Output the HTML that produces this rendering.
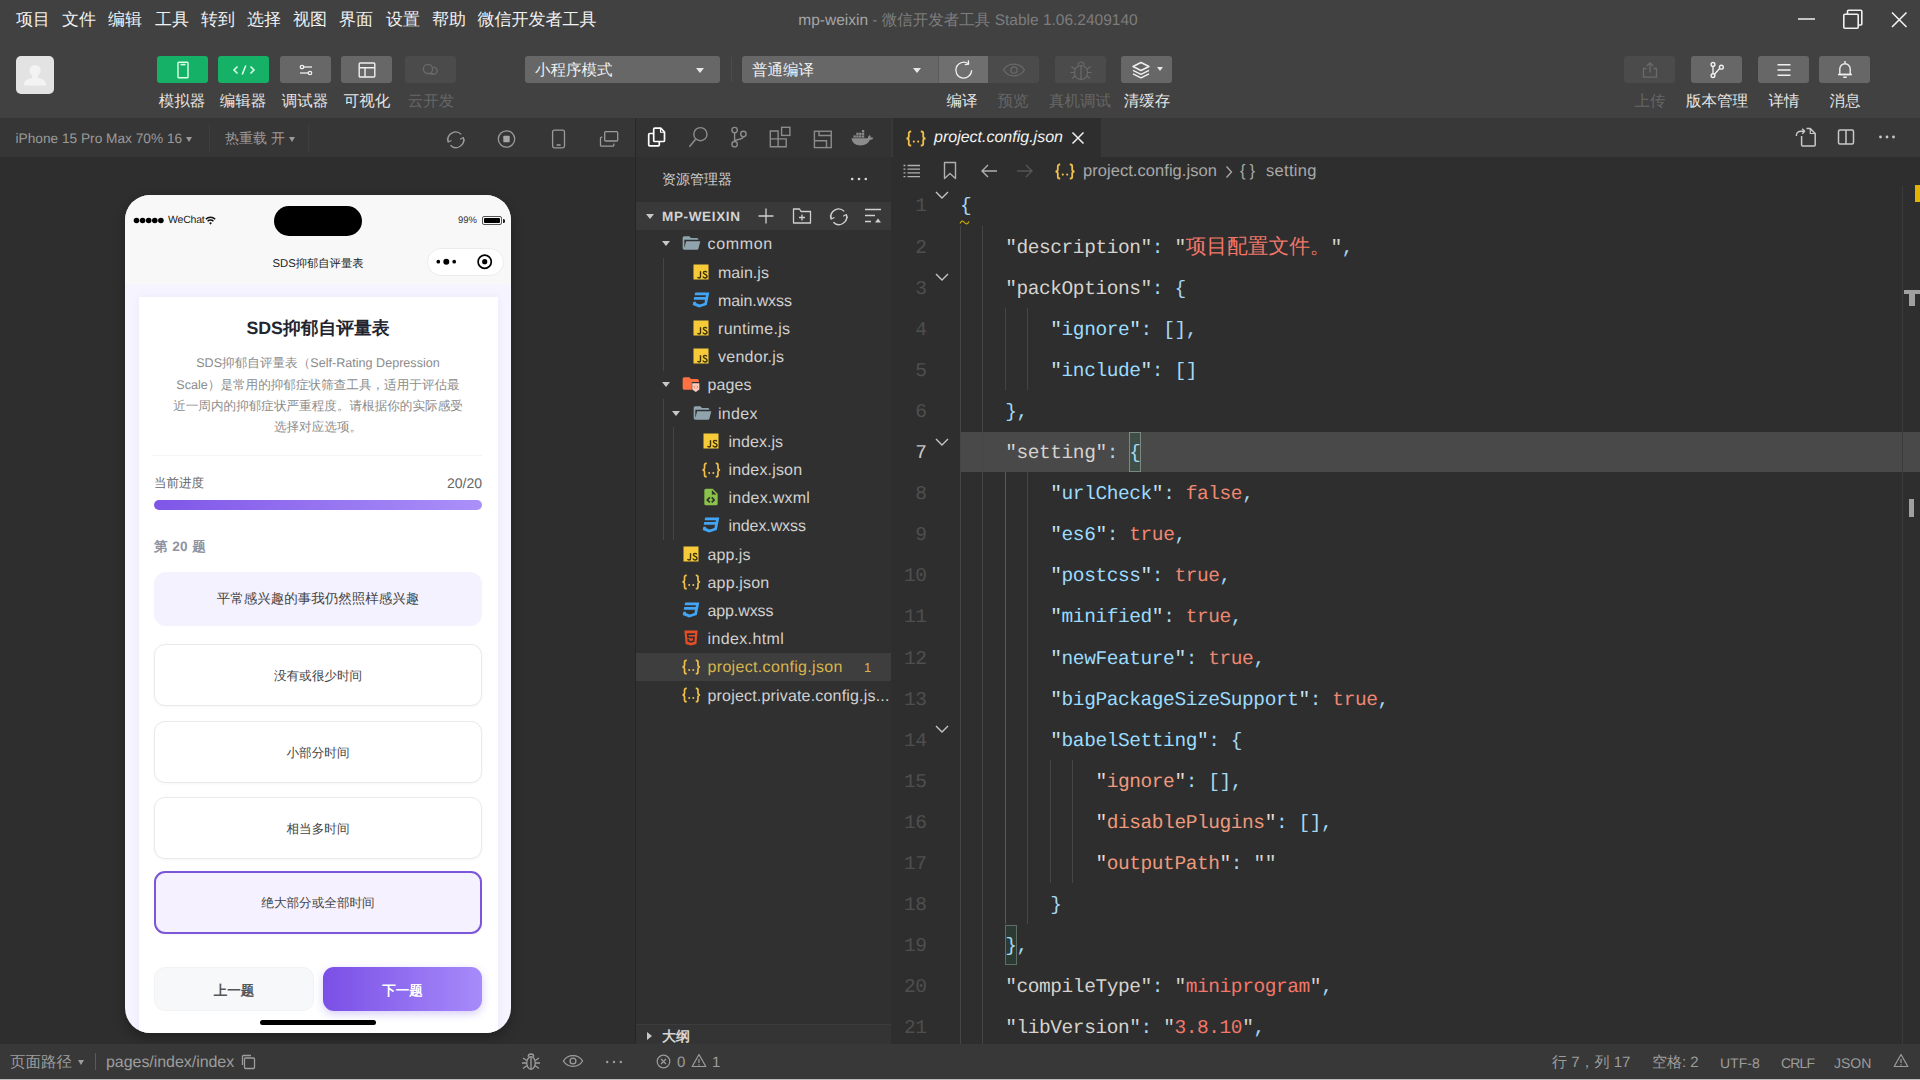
<!DOCTYPE html>
<html lang="zh">
<head>
<meta charset="utf-8">
<title>mp-weixin</title>
<style>
*{box-sizing:border-box;margin:0;padding:0}
html,body{width:1920px;height:1080px;overflow:hidden;background:#2e2e2e}
body{font-family:"Liberation Sans",sans-serif;color:#ccc;position:relative;text-rendering:geometricPrecision}
.abs{position:absolute}
svg{display:block;overflow:visible}
/* ---------- top bars ---------- */
#menubar{position:absolute;left:0;top:0;width:1920px;height:40px;background:#414141}
#menubar .mi{position:absolute;top:0;height:40px;line-height:40px;font-size:17px;color:#f2f2f2;white-space:nowrap;text-align:center}
#wtitle{position:absolute;left:668px;width:600px;top:1px;height:40px;line-height:40px;text-align:center;font-size:15.5px;color:#7d7d7d;white-space:nowrap}
#wtitle b{font-weight:normal;color:#a6a6a6}
#toolbar{position:absolute;left:0;top:40px;width:1920px;height:78px;background:#414141}
.tbtn{position:absolute;top:16px;width:51px;height:27px;border-radius:3px;background:#676767}
.tbtn.g{background:#14b167}
.tbtn.d{background:#4b4b4b}
.tbtn svg{position:absolute;left:50%;top:50%;transform:translate(-50%,-50%)}
.tlab{position:absolute;top:50.500px;width:90px;height:22px;line-height:22px;margin-left:-45px;text-align:center;font-size:15.5px;color:#e6e6e6;white-space:nowrap}
.tlab.d{color:#666}
.tsel{position:absolute;top:16px;height:27px;border-radius:3px;background:#676767;color:#f0f0f0;font-size:15.5px;line-height:29px;padding-left:10px;white-space:nowrap}
.caret{position:absolute;width:0;height:0;border-left:4px solid transparent;border-right:4px solid transparent;border-top:5px solid #e8e8e8}
/* ---------- row 3 ---------- */
#simbar{position:absolute;left:0;top:118px;width:635px;height:39px;background:#363636}
#simbar .t{position:absolute;top:1px;height:39px;line-height:39px;font-size:14px;color:#9a9a9a;white-space:nowrap}
#vsep{position:absolute;left:635px;top:118px;width:1px;height:962px;background:#262626}
#actbar{position:absolute;left:636px;top:118px;width:255px;height:39px;background:#333}
#tabbar{position:absolute;left:891px;top:118px;width:1029px;height:39px;background:#383838}
#tab{position:absolute;left:2px;top:0;width:208px;height:39px;background:#2e2e2e}
/* ---------- panels ---------- */
#sim{position:absolute;left:0;top:157px;width:635px;height:888px;background:#2e2e2e}
#explorer{position:absolute;left:636px;top:157px;width:255px;height:888px;background:#303030}
#editor{position:absolute;left:891px;top:157px;width:1029px;height:888px;background:#2e2e2e;overflow:hidden}
#bottombar{position:absolute;left:0;top:1044px;width:1920px;height:36px;background:#383838;border-bottom:1px solid #bdbdbd}

/* ---------- phone ---------- */
#phone{position:absolute;left:125px;top:38px;width:386px;height:838px;border-radius:25px;background:#f6f4ff;overflow:hidden;box-shadow:0 5px 12px rgba(0,0,0,.28)}
#phead{position:absolute;left:0;top:0;width:386px;height:89px;background:#f8f8f8}
#card{position:absolute;left:13.5px;top:102px;width:359.5px;height:760px;background:#fff;box-shadow:0 0 8px rgba(120,100,200,.08)}
.pc{position:absolute;left:0;width:386px;text-align:center;white-space:nowrap}
.opt{position:absolute;left:29px;width:328px;border:1.5px solid #e9e9ee;border-radius:11px;background:#fff;text-align:center;font-size:12.600px;color:#444;white-space:nowrap;box-shadow:0 1px 3px rgba(0,0,0,.04)}

/* ---------- explorer ---------- */
.row{position:absolute;left:0;width:255px;height:28.200px;line-height:28px;font-size:16px;color:#d0d0d0;white-space:nowrap;letter-spacing:-0.1px}
.row .tx{position:absolute;top:1.500px}
.row svg.ic{position:absolute;top:3.500px}
.tri{position:absolute;width:0;height:0;border-left:4px solid transparent;border-right:4px solid transparent;border-top:5.500px solid #c8c8c8}
.guide{position:absolute;width:1px;background:#454545}

/* ---------- editor ---------- */
#editor{font-family:"Liberation Mono",monospace}
.ln{position:absolute;left:0;width:35.500px;text-align:right;font-size:19.500px;letter-spacing:-0.42px;color:#4e4e4e;height:41.100px;line-height:45px;white-space:pre}
.cl{position:absolute;left:69px;font-size:19.500px;letter-spacing:-0.42px;color:#d4d4d4;height:41.100px;line-height:45px;white-space:pre}
.k1{color:#d6d3ce}.k2{color:#9cdcfe}.k3{color:#ee9a7d}.q2{color:#c3e3f4}.q3{color:#e8d8d2}
.p{color:#a6d8f2}.s{color:#f2776a}.b{color:#ee8872}
.ig{position:absolute;width:1px;background:#454545}
.chev{position:absolute;left:44px}
.bc{position:absolute;top:0;line-height:29px;font-family:"Liberation Sans",sans-serif;font-size:16.500px;color:#a9a9a9;white-space:nowrap;letter-spacing:0.05px}

/* ---------- bottom bar ---------- */
#bottombar .t{position:absolute;top:1px;height:35px;line-height:36px;font-size:15px;color:#9d9d9d;white-space:nowrap}
</style>
</head>
<body>
<!-- ================= MENU BAR ================= -->
<div id="menubar">
  <div class="mi" style="left:10px;width:46px">项目</div>
  <div class="mi" style="left:56px;width:46px">文件</div>
  <div class="mi" style="left:102px;width:46px">编辑</div>
  <div class="mi" style="left:149px;width:46px">工具</div>
  <div class="mi" style="left:195px;width:46px">转到</div>
  <div class="mi" style="left:241px;width:46px">选择</div>
  <div class="mi" style="left:287px;width:46px">视图</div>
  <div class="mi" style="left:333px;width:46px">界面</div>
  <div class="mi" style="left:380px;width:46px">设置</div>
  <div class="mi" style="left:426px;width:46px">帮助</div>
  <div class="mi" style="left:472px;width:130px">微信开发者工具</div>
  <div id="wtitle"><b>mp-weixin</b> - 微信开发者工具 Stable 1.06.2409140</div>
  <svg class="abs" style="left:1794px;top:8px" width="24" height="24" viewBox="0 0 24 24" fill="none" stroke="#f0f0f0" stroke-width="1.500"><path d="M4 11h17"/></svg>
  <svg class="abs" style="left:1840px;top:8px" width="24" height="24" viewBox="0 0 24 24" fill="none" stroke="#f0f0f0" stroke-width="1.600"><rect x="3.800" y="6.300" width="14.400" height="14" rx="1"/><path d="M7.500 6V3.200a1 1 0 0 1 1-1h12.300a1 1 0 0 1 1 1V16a1 1 0 0 1-1 1H18.500"/></svg>
  <svg class="abs" style="left:1887px;top:8px" width="24" height="24" viewBox="0 0 24 24" fill="none" stroke="#f0f0f0" stroke-width="1.600"><path d="M5 4.500l14.500 14.500M19.500 4.500L5 19"/></svg>
</div>
<!-- ================= TOOLBAR ================= -->
<div id="toolbar">
  <div class="abs" style="left:16px;top:16px;width:38px;height:38px;border-radius:5px;background:#e3e3e3;overflow:hidden">
    <svg width="38" height="38" viewBox="0 0 38 38"><circle cx="19" cy="14.500" r="5.600" fill="#f3f3f3"/><path d="M16 18h6v4c4 .5 8 2 8 7.500H8c0-5.500 4-7 8-7.500z" fill="#f3f3f3"/></svg>
  </div>
  <!-- left buttons -->
  <div class="tbtn g" style="left:157px"><svg width="14" height="18" viewBox="0 0 14 18" fill="none" stroke="#d9ffe9" stroke-width="1.4"><rect x="2" y="1.2" width="10" height="15.6" rx="0.8"/><path d="M4.5 3.6h5" stroke-width="1.6"/></svg></div>
  <div class="tbtn g" style="left:218px"><svg width="24" height="12" viewBox="0 0 24 12" fill="none" stroke="#d9ffe9" stroke-width="1.6"><path d="M5.5 2.5L2 6l3.500 3.500M18.500 2.500L22 6l-3.500 3.500M13.800 1.500l-3.600 9"/></svg></div>
  <div class="tbtn" style="left:280px"><svg width="14" height="12" viewBox="0 0 14 12" fill="none" stroke="#f0f0f0" stroke-width="1.3"><circle cx="3" cy="3" r="1.700"/><path d="M4.700 3H13"/><circle cx="11" cy="9" r="1.700"/><path d="M1 9h8.300"/></svg></div>
  <div class="tbtn" style="left:341px"><svg width="18" height="16" viewBox="0 0 18 16" fill="none" stroke="#f0f0f0" stroke-width="1.4"><rect x="1.200" y="1" width="15.600" height="14" rx="1"/><path d="M1.200 5.800h15.600M7 5.800V15"/></svg></div>
  <div class="tbtn d" style="left:405px"><svg width="20" height="14" viewBox="0 0 20 14" fill="none" stroke="#6a6a6a" stroke-width="1.300"><circle cx="7" cy="6" r="4.600"/><path d="M9.500 9.800a3.600 3.600 0 1 0 3-5.600"/><path d="M7 10.600h6"/></svg></div>
  <div class="tlab" style="left:182px">模拟器</div>
  <div class="tlab" style="left:243px">编辑器</div>
  <div class="tlab" style="left:305px">调试器</div>
  <div class="tlab" style="left:367px">可视化</div>
  <div class="tlab d" style="left:431px">云开发</div>
  <!-- selects -->
  <div class="tsel" style="left:525px;width:195px">小程序模式<div class="caret" style="left:171px;top:12px"></div></div>
  <div class="abs" style="left:731px;top:17px;width:1px;height:25px;background:#4c4c4c"></div>
  <div class="tsel" style="left:742px;width:196px;border-radius:3px 0 0 3px">普通编译<div class="caret" style="left:171px;top:12px"></div></div>
  <div class="tbtn" style="left:938px;width:50px;border-radius:0;background:#6f6f6f;border-left:1px solid #5a5a5a"><svg width="22" height="22" viewBox="0 0 22 22" fill="none" stroke="#f2f2f2" stroke-width="1.250"><path d="M18.600 11.200a7.900 7.900 0 1 1-3.200-6.400"/><path d="M15.300 1.200l.4 3.900-3.900.5" stroke-linejoin="round"/></svg></div>
  <div class="tbtn d" style="left:988px;width:51px;border-radius:0 3px 3px 0"><svg width="24" height="14" viewBox="0 0 24 14" fill="none" stroke="#6a6a6a" stroke-width="1.300"><path d="M1.500 7C4 3 7.800 1.200 12 1.200S20 3 22.500 7C20 11 16.200 12.800 12 12.800S4 11 1.500 7z"/><circle cx="12" cy="7" r="3.200"/></svg></div>
  <div class="tbtn d" style="left:1055px"><svg width="23" height="20" viewBox="0 0 23 20" fill="none" stroke="#6a6a6a" stroke-width="1.200"><path d="M5 12a6.500 6.500 0 0 1 13 0v1a6.500 6.500 0 0 1-13 0z"/><path d="M11.500 5.500v14M8.300 5.200a3.200 3.200 0 0 1 6.400 0M5.200 9L2 6.500M5 12.500H1M5.500 16L2.500 18.500M17.800 9L21 6.500M18 12.500h4M17.500 16l3 2.500"/></svg></div>
  <div class="tbtn" style="left:1121px"><svg style="left:20px" width="20" height="18" viewBox="0 0 20 18" fill="none" stroke="#f0f0f0" stroke-width="1.400" stroke-linejoin="round"><path d="M10 1.500l8 4-8 4-8-4z"/><path d="M2 9.300l8 4 8-4"/><path d="M2 12.800l8 4 8-4"/></svg><div class="caret" style="left:36px;top:11px;border-left-width:3.500px;border-right-width:3.500px;border-top-width:4.500px"></div></div>
  <div class="tlab" style="left:962px">编译</div>
  <div class="tlab d" style="left:1013px">预览</div>
  <div class="tlab d" style="left:1080px">真机调试</div>
  <div class="tlab" style="left:1147px">清缓存</div>
  <!-- right buttons -->
  <div class="tbtn d" style="left:1624px"><svg width="18" height="18" viewBox="0 0 18 18" fill="none" stroke="#6a6a6a" stroke-width="1.300"><path d="M9 11.500V2M5.800 5L9 1.800 12.200 5"/><path d="M5.500 7.500H2.500v8.700h13V7.500h-3"/></svg></div>
  <div class="tbtn" style="left:1691px"><svg width="16" height="18" viewBox="0 0 16 18" fill="none" stroke="#f0f0f0" stroke-width="1.400"><circle cx="4" cy="3.400" r="1.900"/><circle cx="4" cy="14.600" r="1.900"/><circle cx="12.400" cy="6.200" r="1.900"/><path d="M4 5.300v7.400M10.800 7.200L5.500 13.200"/></svg></div>
  <div class="tbtn" style="left:1758px"><svg width="16" height="14" viewBox="0 0 16 14" fill="none" stroke="#f0f0f0" stroke-width="1.500"><path d="M1.500 1.800h13M1.500 7h13M1.500 12.200h13"/></svg></div>
  <div class="tbtn" style="left:1819px"><svg width="16" height="20" viewBox="0 0 16 20" fill="none" stroke="#f0f0f0" stroke-width="1.400" stroke-linejoin="round"><path d="M8 1v2"/><path d="M2.800 14.500V9a5.200 5.200 0 0 1 10.400 0v5.500z"/><path d="M1 14.500h14M6.300 17.300h3.400"/></svg></div>
  <div class="tlab d" style="left:1650px">上传</div>
  <div class="tlab" style="left:1717px">版本管理</div>
  <div class="tlab" style="left:1784px">详情</div>
  <div class="tlab" style="left:1845px">消息</div>
</div>
<!-- ================= ROW 3 ================= -->
<div id="simbar">
  <div class="t" style="left:15.500px;font-size:13.700px">iPhone 15 Pro Max 70% 16</div>
  <div class="caret" style="left:186px;top:18.500px;border-top-color:#9a9a9a;border-left-width:3.500px;border-right-width:3.500px"></div>
  <div class="t" style="left:225px">热重载 开</div>
  <div class="caret" style="left:289px;top:18.500px;border-top-color:#9a9a9a;border-left-width:3.500px;border-right-width:3.500px"></div>
  <div class="abs" style="left:209px;top:6px;width:1px;height:28px;background:#3e3e3e"></div><div class="abs" style="left:308px;top:6px;width:1px;height:28px;background:#3e3e3e"></div>
  <svg class="abs" style="left:445px;top:10.500px" width="22" height="22" viewBox="0 0 22 22" fill="none" stroke="#9a9a9a" stroke-width="1.300"><path d="M3.300 13a7.700 7.700 0 0 1 12.900-7.600M18.300 8.600a7.700 7.700 0 0 1-12.900 7.600"/><path d="M2.200 9.300l1 3.800 3.300-1.700M19.400 12.300l-1-3.800-3.300 1.700" stroke-linejoin="round" stroke-width="1.100"/></svg>
  <svg class="abs" style="left:496px;top:11px" width="20" height="20" viewBox="0 0 20 20" fill="none" stroke="#9a9a9a" stroke-width="1.300"><circle cx="10.500" cy="10" r="8.200"/><rect x="7.300" y="6.800" width="6.400" height="6.400" rx="0.800" fill="#a6a6a6" stroke="none"/></svg>
  <svg class="abs" style="left:550.500px;top:11px" width="16" height="20" viewBox="0 0 16 20" fill="none" stroke="#9a9a9a" stroke-width="1.300"><rect x="1.600" y="1.200" width="11.900" height="17.600" rx="1.800"/><path d="M5.600 16h4" stroke-width="1.600"/></svg>
  <svg class="abs" style="left:598px;top:11px" width="22" height="20" viewBox="0 0 22 20" fill="none" stroke="#9a9a9a" stroke-width="1.300"><rect x="6.700" y="2.700" width="13" height="9.300" rx="1"/><path d="M4.300 8.200H3.500a1 1 0 0 0-1 1v7a1 1 0 0 0 1 1h11.400a1 1 0 0 0 1-1v-1.600"/></svg>
</div>
<div id="actbar">
  <svg class="abs" style="left:0;top:0" width="255" height="39" viewBox="0 0 255 39" fill="none" stroke="#8c8c8c" stroke-width="1.400">
    <g stroke="#fff" stroke-width="1.700" stroke-linejoin="round"><path d="M17.700 22.500V11.200a1 1 0 0 1 1-1h6l3.800 3.800v8.500a1 1 0 0 1-1 1H18.700a1 1 0 0 1-1-1z"/><path d="M24.500 10.200v4h4" stroke-width="1.100"/><path d="M17.700 15.500H13.700a1 1 0 0 0-1 1v10.300a1 1 0 0 0 1 1h8.600a1 1 0 0 0 1-1V23.500"/></g>
    <circle cx="64.400" cy="16.200" r="6.600"/><path d="M59.600 21.300L53.400 28.700" stroke-width="1.600"/>
    <circle cx="98.600" cy="12.100" r="2.700"/><circle cx="107.400" cy="15.900" r="2.700"/><circle cx="98.600" cy="26.200" r="2.700"/><path d="M98.600 14.800v8.700M107.400 18.600c0 4-8.800 2-8.800 5"/>
    <path d="M134.300 13h7.800v15.700h-7.800zM134.300 20.900h15.900v7.800h-15.900z"/><rect x="145.600" y="9.300" width="8.300" height="8.100"/>
    <rect x="178.400" y="13.250" width="16.850" height="16.350"/><path d="M183 13.250v4.200h12.200M178.400 22.750h12.100v6.800"/>
    <g fill="#8c8c8c" stroke="none"><path d="M215.500 20.200h16.300c.2-1.600 1-2.700 2.100-3.200.7.900.9 1.700.7 2.600.9-.3 1.900-.2 2.700.3-.7 1.400-1.900 1.900-3.300 1.800-1.800 3.700-4.700 5.700-9.300 5.700-4.700 0-8.500-2.200-9.200-7.200z"/><rect x="217.500" y="17.400" width="2.300" height="2.200"/><rect x="220.300" y="17.400" width="2.300" height="2.200"/><rect x="223.100" y="17.400" width="2.300" height="2.200"/><rect x="225.900" y="17.400" width="2.300" height="2.200"/><rect x="220.300" y="14.700" width="2.300" height="2.200"/><rect x="223.100" y="14.700" width="2.300" height="2.200"/><rect x="225.900" y="14.700" width="2.300" height="2.200"/><rect x="225.900" y="12" width="2.300" height="2.200"/></g>
  </svg>
</div>
<div id="tabbar">
  <div id="tab"><svg class="abs" style="left:11.500px;top:11.500px" width="22" height="17"><use href="#i-json"/></svg>
    <span class="abs" style="left:41px;top:0;line-height:40px;font-size:16px;font-style:italic;color:#f2f2f2;white-space:nowrap;letter-spacing:0">project.config.json</span>
    <svg class="abs" style="left:178px;top:13px" width="14" height="14" viewBox="0 0 14 14" fill="none" stroke="#f2f2f2" stroke-width="1.500"><path d="M1.500 1.500l11 11M12.500 1.500l-11 11"/></svg></div>
  <svg class="abs" style="left:902px;top:8px" width="24" height="22" viewBox="0 0 24 22" fill="none" stroke="#c8c8c8" stroke-width="1.500" stroke-linejoin="round"><path d="M8.600 10V19a1 1 0 0 0 1 1h11.600a1 1 0 0 0 1-1V7.500L17.300 2.600H13.500"/><path d="M17.300 2.600v4.900h4.900" stroke-width="1.200"/><path d="M3.400 10c-.3-3 1.600-4.800 4.800-4.800h3.300M9.200 2.700l2.500 2.500-2.500 2.500" stroke-width="1.400"/></svg>
  <svg class="abs" style="left:945px;top:9px" width="20" height="20" viewBox="0 0 20 20" fill="none" stroke="#c8c8c8" stroke-width="1.500"><rect x="2.500" y="3" width="15" height="14" rx="1.500"/><path d="M10 3v14"/></svg>
  <svg class="abs" style="left:987px;top:17px" width="18" height="4" viewBox="0 0 18 4" fill="#c8c8c8"><circle cx="2.500" cy="2" r="1.400"/><circle cx="9" cy="2" r="1.400"/><circle cx="15.500" cy="2" r="1.400"/></svg>
</div>
<!-- ================= PANELS ================= -->
<div id="sim">
  <div id="phone">
    <div id="phead"></div>
    <!-- status bar -->
    <svg class="abs" style="left:8px;top:22px" width="32" height="7" viewBox="0 0 32 7" fill="#000"><circle cx="3.500" cy="3.500" r="2.800"/><circle cx="9.600" cy="3.500" r="2.800"/><circle cx="15.700" cy="3.500" r="2.800"/><circle cx="21.800" cy="3.500" r="2.800"/><circle cx="27.900" cy="3.500" r="2.800"/></svg>
    <div class="abs" style="left:43px;top:18px;line-height:14px;font-size:10.500px;color:#222;letter-spacing:-0.2px">WeChat</div>
    <svg class="abs" style="left:79.500px;top:20.500px" width="11" height="9" viewBox="0 0 11 9" fill="none" stroke="#111" stroke-width="1.500"><path d="M0.800 3.200a6.600 6.600 0 0 1 9.400 0M2.600 5.200a4 4 0 0 1 5.800 0"/><circle cx="5.500" cy="7.300" r="1.100" fill="#111" stroke="none"/></svg>
    <div class="abs" style="left:149px;top:11px;width:88px;height:30px;border-radius:15px;background:#000"></div>
    <div class="abs" style="left:322px;width:30px;top:19px;line-height:14px;font-size:9.500px;color:#333;text-align:right">99%</div>
    <div class="abs" style="left:356.500px;top:21px;width:20.500px;height:9px;border:1px solid #555;border-radius:2px"><div class="abs" style="left:1px;top:1px;width:16.500px;height:5px;background:#000;border-radius:1px"></div></div>
    <div class="abs" style="left:378px;top:24px;width:1.600px;height:3.500px;background:#222;border-radius:0 1.500px 1.500px 0"></div>
    <!-- nav -->
    <div class="pc" style="top:60px;line-height:18px;font-size:11.300px;color:#222">SDS抑郁自评量表</div>
    <div class="abs" style="left:302px;top:53px;width:77px;height:28px;border-radius:14px;background:#fff;border:1px solid #ececec"></div>
    <svg class="abs" style="left:309px;top:62px" width="26" height="10" viewBox="0 0 26 10" fill="#000"><circle cx="4.300" cy="4.700" r="1.850"/><circle cx="12.300" cy="4.700" r="3"/><circle cx="20.200" cy="4.700" r="1.850"/></svg>
    <svg class="abs" style="left:351px;top:58px" width="18" height="18" viewBox="0 0 18 18"><circle cx="8.700" cy="8.700" r="6.600" fill="none" stroke="#000" stroke-width="1.700"/><circle cx="8.700" cy="8.700" r="2.600" fill="#000"/></svg>
    <!-- card -->
    <div id="card"></div>
    <div class="pc" style="top:120px;line-height:26px;font-size:17.800px;font-weight:bold;color:#22252f">SDS抑郁自评量表</div>
    <div class="pc" style="top:158.300px;line-height:21.200px;font-size:12.600px;color:#8c8c8c">SDS抑郁自评量表（Self-Rating Depression<br>Scale）是常用的抑郁症状筛查工具，适用于评估最<br>近一周内的抑郁症状严重程度。请根据你的实际感受<br>选择对应选项。</div>
    <div class="abs" style="left:27px;top:260px;width:330px;height:1px;background:#f5f5f7"></div>
    <div class="abs" style="left:29px;top:279px;line-height:18px;font-size:12.500px;color:#666;white-space:nowrap">当前进度</div>
    <div class="abs" style="left:257px;width:100px;top:279px;line-height:18px;font-size:14px;color:#666;text-align:right">20/20</div>
    <div class="abs" style="left:29px;top:305px;width:328px;height:9.500px;border-radius:5px;background:linear-gradient(90deg,#7f56e8,#ab90f9)"></div>
    <div class="abs" style="left:29px;top:342px;line-height:20px;font-size:13.600px;font-weight:bold;color:#8f93a1;white-space:nowrap;word-spacing:1px">第 20 题</div>
    <div class="abs" style="left:29px;top:376.500px;width:328px;height:54px;border-radius:12px;background:#f4f2fe;text-align:center;line-height:54px;font-size:13.500px;color:#444;white-space:nowrap">平常感兴趣的事我仍然照样感兴趣</div>
    <div class="opt" style="top:449px;height:62px;line-height:62px">没有或很少时间</div>
    <div class="opt" style="top:526px;height:62px;line-height:62px">小部分时间</div>
    <div class="opt" style="top:602px;height:62px;line-height:62px">相当多时间</div>
    <div class="opt" style="top:676px;height:63px;line-height:61px;border:2px solid #7b56d9;background:#f5f1ff">绝大部分或全部时间</div>
    <div class="abs" style="left:29px;top:772px;width:160px;height:44px;border-radius:11px;background:#f7f8fa;border:1px solid #f1f2f4;text-align:center;line-height:46px;font-size:13.500px;font-weight:bold;color:#555;white-space:nowrap">上一题</div>
    <div class="abs" style="left:198px;top:772px;width:159px;height:44px;border-radius:11px;background:linear-gradient(90deg,#7a4fe6,#a78bfa);box-shadow:0 3px 8px rgba(124,92,232,.3);text-align:center;line-height:47px;font-size:13.500px;font-weight:bold;color:#fff;white-space:nowrap">下一题</div>
    <div class="abs" style="left:135px;top:825px;width:116px;height:4.500px;border-radius:3px;background:#000"></div>
  </div>
</div>
<div id="explorer">
  <svg width="0" height="0" style="position:absolute"><defs>
    <symbol id="i-fold" viewBox="0 0 24 24"><path fill="#90a4ae" d="M19 20H4a2 2 0 0 1-2-2V6c0-1.110.890-2 2-2h6l2 2h7a2 2 0 0 1 2 2H4v10l2.140-8h17.070l-2.280 8.500c-.230.870-1.010 1.500-1.930 1.500z"/></symbol>
    <symbol id="i-pages" viewBox="0 0 24 24"><path fill="#ff7043" d="M10 4H4c-1.110 0-2 .890-2 2v11a2 2 0 0 0 2 2h9V9.500h8.500V8a2 2 0 0 0-2-2H12l-2-2z"/><path fill="#ffccbc" d="M13.500 11h8.500v7.500l-4.250 3-4.250-3z"/><path fill="none" stroke="#ff7043" stroke-width="1.100" d="M16.800 14l-1.600 1.600 1.600 1.600M18.700 14l1.600 1.600-1.600 1.600"/></symbol>
    <symbol id="i-js" viewBox="0 0 24 24"><rect x="3" y="3" width="18" height="18" fill="#f7ca39"/><path fill="none" stroke="#3a3000" stroke-width="1.700" d="M11.400 11.200v6.200c0 1.200-.7 1.800-1.700 1.800-.9 0-1.500-.5-1.900-1.200M19 12.500c-.5-.8-1.200-1.300-2.200-1.300-1.100 0-1.900.7-1.900 1.700 0 2.300 4.300 1.500 4.300 4.100 0 1.300-1 2.100-2.400 2.100-1.300 0-2.200-.6-2.600-1.600"/></symbol>
    <symbol id="i-css" viewBox="0 0 24 24"><path fill="#42a5f5" d="M5 3l-.650 3.340h13.590L17.500 8.500H3.920l-.660 3.330h13.590l-.760 3.810-5.480 1.810-4.750-1.810.330-1.640H2.850l-.790 4 7.850 3 9.050-3 1.200-6.030.240-1.210L21.940 3H5z"/></symbol>
    <symbol id="i-json" viewBox="0 0 22 17" preserveAspectRatio="none"><path fill="none" stroke="#f1c04b" stroke-width="1.800" d="M6.200 1.500H5.600a1.800 1.800 0 0 0-1.800 1.800v2.900c0 1.300-.8 2.300-2.300 2.300 1.500 0 2.300 1 2.300 2.300v2.900a1.800 1.800 0 0 0 1.800 1.800h.6M15.800 1.500h.6a1.800 1.800 0 0 1 1.800 1.800v2.900c0 1.300.8 2.300 2.300 2.300-1.500 0-2.300 1-2.300 2.300v2.900a1.800 1.800 0 0 1-1.800 1.800h-.6"/><circle cx="8.800" cy="11.600" r="1.050" fill="#f1c04b"/><circle cx="13.200" cy="11.600" r="1.050" fill="#f1c04b"/></symbol>
    <symbol id="i-wxml" viewBox="0 0 24 24"><path fill="#8bc34a" d="M13 9h5.500L13 3.500V9M6 2h8l6 6v12a2 2 0 0 1-2 2H6a2 2 0 0 1-2-2V4c0-1.110.890-2 2-2m.120 13.500l3.740 3.740 1.420-1.410-2.330-2.330 2.330-2.330-1.420-1.410-3.740 3.740m11.160 0l-3.740-3.740-1.420 1.410 2.330 2.330-2.330 2.330 1.420 1.410 3.740-3.740z"/></symbol>
    <symbol id="i-html" viewBox="0 0 24 24"><path fill="#e44d26" d="M12 17.560l4.070-1.130.550-6.100H9.380L9.200 8.300h7.600l.200-1.990H7l.560 6.010h6.890l-.230 2.580-2.220.600-2.220-.600-.140-1.660h-2l.290 3.190L12 17.560M4.070 3h15.860L18.500 19.200 12 21l-6.500-1.800L4.070 3z"/></symbol>
  </defs></svg>
  <div class="abs" style="left:26px;top:12px;line-height:20px;font-size:14px;color:#d0d0d0;white-space:nowrap">资源管理器</div>
  <svg class="abs" style="left:214px;top:20px" width="18" height="4" viewBox="0 0 18 4" fill="#d8d8d8"><circle cx="2.200" cy="2" r="1.300"/><circle cx="9" cy="2" r="1.300"/><circle cx="15.800" cy="2" r="1.300"/></svg>
  <div class="abs" style="left:0;top:45px;width:255px;height:28px;background:#393939"></div>
  <div class="tri" style="left:10px;top:57px"></div>
  <div class="abs" style="left:26px;top:46px;line-height:28px;font-size:13.500px;font-weight:bold;color:#d4d4d4;letter-spacing:0.65px;white-space:nowrap">MP-WEIXIN</div>
  <svg class="abs" style="left:121px;top:50px" width="18" height="18" viewBox="0 0 18 18" fill="none" stroke="#d0d0d0" stroke-width="1.300"><path d="M9 1.500v15M1.500 9h15"/></svg>
  <svg class="abs" style="left:156px;top:49px" width="20" height="20" viewBox="0 0 20 20" fill="none" stroke="#d0d0d0" stroke-width="1.300" stroke-linejoin="round"><path d="M1.500 3h6l1.500 2.500h9.500v11.500h-17z"/><path d="M10 8.500v6M7 11.500h6"/></svg>
  <svg class="abs" style="left:191.500px;top:48.500px" width="22" height="22" viewBox="0 0 22 22" fill="none" stroke="#d0d0d0" stroke-width="1.300"><path d="M3.300 13a7.700 7.700 0 0 1 12.900-7.600M18.300 8.600a7.700 7.700 0 0 1-12.900 7.600"/><path d="M2.200 9.300l1 3.800 3.300-1.700M19.400 12.300l-1-3.800-3.300 1.700" stroke-linejoin="round" stroke-width="1.100"/></svg>
  <svg class="abs" style="left:228px;top:50px" width="18" height="18" viewBox="0 0 18 18" fill="none" stroke="#d0d0d0" stroke-width="1.300"><path d="M1 2.500h16M1 8.500h10M1 14.500h6"/><path d="M14 11.500l3 4h-6z" fill="#d0d0d0" stroke="none"/></svg>
  <div class="guide" style="left:26.500px;top:101px;height:113px"></div>
  <div class="guide" style="left:26.500px;top:242px;height:141px"></div>
  <div class="guide" style="left:36.500px;top:270px;height:113px"></div>
  <div class="row" style="top:72.9px"><div class="tri" style="left:26px;top:11.500px"></div><svg class="ic" style="left:45px" width="20" height="20"><use href="#i-fold"/></svg><span class="tx" style="left:71.5px;letter-spacing:0.67px">common</span></div>
  <div class="row" style="top:101.1px"><svg class="ic" style="left:55px" width="20" height="20"><use href="#i-js"/></svg><span class="tx" style="left:82px;letter-spacing:0.04px">main.js</span></div>
  <div class="row" style="top:129.3px"><svg class="ic" style="left:55px" width="20" height="20"><use href="#i-css"/></svg><span class="tx" style="left:82px;letter-spacing:-0.10px">main.wxss</span></div>
  <div class="row" style="top:157.5px"><svg class="ic" style="left:55px" width="20" height="20"><use href="#i-js"/></svg><span class="tx" style="left:82px;letter-spacing:0.30px">runtime.js</span></div>
  <div class="row" style="top:185.7px"><svg class="ic" style="left:55px" width="20" height="20"><use href="#i-js"/></svg><span class="tx" style="left:82px;letter-spacing:0.26px">vendor.js</span></div>
  <div class="row" style="top:213.9px"><div class="tri" style="left:26px;top:11.500px"></div><svg class="ic" style="left:45px" width="20" height="20"><use href="#i-pages"/></svg><span class="tx" style="left:71.5px;letter-spacing:0.08px">pages</span></div>
  <div class="row" style="top:242.1px"><div class="tri" style="left:36px;top:11.500px"></div><svg class="ic" style="left:56px" width="20" height="20"><use href="#i-fold"/></svg><span class="tx" style="left:82px;letter-spacing:0.32px">index</span></div>
  <div class="row" style="top:270.3px"><svg class="ic" style="left:65px" width="20" height="20"><use href="#i-js"/></svg><span class="tx" style="left:92.5px;letter-spacing:0.04px">index.js</span></div>
  <div class="row" style="top:298.5px"><svg class="ic" style="left:64.5px;top:6px" width="20.500" height="16"><use href="#i-json"/></svg><span class="tx" style="left:92.5px;letter-spacing:0.17px">index.json</span></div>
  <div class="row" style="top:326.7px"><svg class="ic" style="left:65px" width="20" height="20"><use href="#i-wxml"/></svg><span class="tx" style="left:92.5px;letter-spacing:0.25px">index.wxml</span></div>
  <div class="row" style="top:354.9px"><svg class="ic" style="left:65px" width="20" height="20"><use href="#i-css"/></svg><span class="tx" style="left:92.5px;letter-spacing:-0.09px">index.wxss</span></div>
  <div class="row" style="top:383.1px"><svg class="ic" style="left:45px" width="20" height="20"><use href="#i-js"/></svg><span class="tx" style="left:71.5px;letter-spacing:0.05px">app.js</span></div>
  <div class="row" style="top:411.3px"><svg class="ic" style="left:44.5px;top:6px" width="20.500" height="16"><use href="#i-json"/></svg><span class="tx" style="left:71.5px;letter-spacing:0.17px">app.json</span></div>
  <div class="row" style="top:439.5px"><svg class="ic" style="left:45px" width="20" height="20"><use href="#i-css"/></svg><span class="tx" style="left:71.5px;letter-spacing:-0.11px">app.wxss</span></div>
  <div class="row" style="top:467.7px"><svg class="ic" style="left:45px" width="20" height="20"><use href="#i-html"/></svg><span class="tx" style="left:71.5px;letter-spacing:0.37px">index.html</span></div>
  <div class="row" style="top:495.9px;background:#3e3e3e;color:#d7b54c"><svg class="ic" style="left:44.5px;top:6px" width="20.500" height="16"><use href="#i-json"/></svg><span class="tx" style="left:71.5px;letter-spacing:0.33px">project.config.json</span><span class="tx" style="left:228px;font-size:13px">1</span></div>
  <div class="row" style="top:524.1px"><svg class="ic" style="left:44.5px;top:6px" width="20.500" height="16"><use href="#i-json"/></svg><span class="tx" style="left:71.5px;letter-spacing:0.18px">project.private.config.js...</span></div>
  <div class="abs" style="left:0;top:867px;width:255px;height:21px;background:#343434;border-top:1px solid #3c3c3c"></div>
  <div class="abs" style="left:10.500px;top:875px;width:0;height:0;border-top:4px solid transparent;border-bottom:4px solid transparent;border-left:5.500px solid #c8c8c8"></div>
  <div class="abs" style="left:26px;top:869px;line-height:21px;font-size:14px;font-weight:bold;color:#d4d4d4;white-space:nowrap">大纲</div>
</div>
<div id="editor">
  <svg class="abs" style="left:12px;top:6px" width="18" height="16" viewBox="0 0 18 16" fill="none" stroke="#b0b0b0" stroke-width="1.300"><path d="M4.500 2.500h12.500M4.500 6.200h12.500M4.500 9.900h12.500M4.500 13.600h12.500M0.500 2.500h2M0.500 6.200h2M0.500 9.900h2M0.500 13.600h2"/></svg>
  <svg class="abs" style="left:52px;top:4px" width="14" height="20" viewBox="0 0 14 20" fill="none" stroke="#b0b0b0" stroke-width="1.400" stroke-linejoin="round"><path d="M1.500 1.500h11v16l-5.500-5-5.500 5z"/></svg>
  <svg class="abs" style="left:89px;top:6px" width="18" height="16" viewBox="0 0 18 16" fill="none" stroke="#b0b0b0" stroke-width="1.400"><path d="M17 8H2M8 2L2 8l6 6"/></svg>
  <svg class="abs" style="left:125px;top:6px" width="18" height="16" viewBox="0 0 18 16" fill="none" stroke="#555" stroke-width="1.400"><path d="M1 8h15M10 2l6 6-6 6"/></svg>
  <svg class="abs" style="left:163px;top:6px" width="22" height="17"><use href="#i-json"/></svg>
  <span class="bc" style="left:192px">project.config.json</span>
  <svg class="abs" style="left:334px;top:8px" width="8" height="14" viewBox="0 0 8 14" fill="none" stroke="#a9a9a9" stroke-width="1.300"><path d="M1.500 1.500l5 5.500-5 5.500"/></svg>
  <span class="bc" style="left:349px;letter-spacing:4px">{}</span>
  <span class="bc" style="left:375px;letter-spacing:0.3px">setting</span>
  <div class="abs" style="left:69px;top:274.500px;width:960px;height:40.500px;background:#494949"></div>
  <div class="abs" style="left:237.700px;top:274.500px;width:12.500px;height:40.500px;border:1px solid #7a8a82;background:#3f4e47"></div>
  <div class="abs" style="left:113.600px;top:767.500px;width:12.500px;height:40.500px;border:1px solid #5f6f68;background:#2c3a34"></div>
  <div class="ig" style="left:69.0px;top:68.5px;height:863.1px"></div>
  <div class="ig" style="left:91.4px;top:68.5px;height:863.1px"></div>
  <div class="ig" style="left:113.9px;top:150.8px;height:82.2px"></div>
  <div class="ig" style="left:136.3px;top:150.8px;height:82.2px"></div>
  <div class="ig" style="left:113.9px;top:315.1px;height:452.1px;background:#5a5a5a"></div>
  <div class="ig" style="left:136.3px;top:315.1px;height:452.1px"></div>
  <div class="ig" style="left:158.8px;top:602.9px;height:123.3px"></div>
  <div class="ig" style="left:181.2px;top:602.9px;height:123.3px"></div>
  <div class="ln" style="top:27.45px">1</div><div class="cl" style="top:27.45px"><span class="p">{</span></div>
  <div class="ln" style="top:68.55px">2</div><div class="cl" style="top:68.55px">    <span class="k1">"</span><span class="k1">description</span><span class="k1">"</span><span class="p">: </span><span class="k1">"</span><span class="s" style="font-size:20.700px;letter-spacing:0;line-height:20px">项目配置文件。</span><span class="k1">"</span><span class="p">,</span></div>
  <div class="ln" style="top:109.65px">3</div><div class="cl" style="top:109.65px">    <span class="k1">"</span><span class="k1">packOptions</span><span class="k1">"</span><span class="p">: </span><span class="p">{</span></div>
  <div class="ln" style="top:150.75px">4</div><div class="cl" style="top:150.75px">        <span class="q2">"</span><span class="k2">ignore</span><span class="q2">"</span><span class="p">: </span><span class="p">[],</span></div>
  <div class="ln" style="top:191.85px">5</div><div class="cl" style="top:191.85px">        <span class="q2">"</span><span class="k2">include</span><span class="q2">"</span><span class="p">: </span><span class="p">[]</span></div>
  <div class="ln" style="top:232.95px">6</div><div class="cl" style="top:232.95px">    <span class="p">},</span></div>
  <div class="ln" style="top:274.05px;color:#c6c6c6">7</div><div class="cl" style="top:274.05px">    <span class="k1">"</span><span class="k1">setting</span><span class="k1">"</span><span class="p">: </span><span class="p">{</span></div>
  <div class="ln" style="top:315.15px">8</div><div class="cl" style="top:315.15px">        <span class="q2">"</span><span class="k2">urlCheck</span><span class="q2">"</span><span class="p">: </span><span class="b">false</span><span class="p">,</span></div>
  <div class="ln" style="top:356.25px">9</div><div class="cl" style="top:356.25px">        <span class="q2">"</span><span class="k2">es6</span><span class="q2">"</span><span class="p">: </span><span class="b">true</span><span class="p">,</span></div>
  <div class="ln" style="top:397.35px">10</div><div class="cl" style="top:397.35px">        <span class="q2">"</span><span class="k2">postcss</span><span class="q2">"</span><span class="p">: </span><span class="b">true</span><span class="p">,</span></div>
  <div class="ln" style="top:438.45px">11</div><div class="cl" style="top:438.45px">        <span class="q2">"</span><span class="k2">minified</span><span class="q2">"</span><span class="p">: </span><span class="b">true</span><span class="p">,</span></div>
  <div class="ln" style="top:479.55px">12</div><div class="cl" style="top:479.55px">        <span class="q2">"</span><span class="k2">newFeature</span><span class="q2">"</span><span class="p">: </span><span class="b">true</span><span class="p">,</span></div>
  <div class="ln" style="top:520.65px">13</div><div class="cl" style="top:520.65px">        <span class="q2">"</span><span class="k2">bigPackageSizeSupport</span><span class="q2">"</span><span class="p">: </span><span class="b">true</span><span class="p">,</span></div>
  <div class="ln" style="top:561.75px">14</div><div class="cl" style="top:561.75px">        <span class="q2">"</span><span class="k2">babelSetting</span><span class="q2">"</span><span class="p">: </span><span class="p">{</span></div>
  <div class="ln" style="top:602.85px">15</div><div class="cl" style="top:602.85px">            <span class="q3">"</span><span class="k3">ignore</span><span class="q3">"</span><span class="p">: </span><span class="p">[],</span></div>
  <div class="ln" style="top:643.95px">16</div><div class="cl" style="top:643.95px">            <span class="q3">"</span><span class="k3">disablePlugins</span><span class="q3">"</span><span class="p">: </span><span class="p">[],</span></div>
  <div class="ln" style="top:685.05px">17</div><div class="cl" style="top:685.05px">            <span class="q3">"</span><span class="k3">outputPath</span><span class="q3">"</span><span class="p">: </span><span class="k1">""</span></div>
  <div class="ln" style="top:726.15px">18</div><div class="cl" style="top:726.15px">        <span class="p">}</span></div>
  <div class="ln" style="top:767.25px">19</div><div class="cl" style="top:767.25px">    <span class="p">},</span></div>
  <div class="ln" style="top:808.35px">20</div><div class="cl" style="top:808.35px">    <span class="k1">"</span><span class="k1">compileType</span><span class="k1">"</span><span class="p">: </span><span class="k1">"</span><span class="s">miniprogram</span><span class="k1">"</span><span class="p">,</span></div>
  <div class="ln" style="top:849.45px">21</div><div class="cl" style="top:849.45px">    <span class="k1">"</span><span class="k1">libVersion</span><span class="k1">"</span><span class="p">: </span><span class="k1">"</span><span class="s">3.8.10</span><span class="k1">"</span><span class="p">,</span></div>
  <div class="ln" style="top:890.55px">22</div><div class="cl" style="top:890.55px">    <span class="k1">"</span><span class="k1">appid</span><span class="k1">"</span><span class="p">: </span><span class="k1">"</span><span class="s">touristappid</span><span class="k1">"</span><span class="p">,</span></div>
  <svg class="chev" style="top:34.0px" width="14" height="8" viewBox="0 0 14 8" fill="none" stroke="#c5c5c5" stroke-width="1.400"><path d="M1 1l6 6 6-6"/></svg>
  <svg class="chev" style="top:116.2px" width="14" height="8" viewBox="0 0 14 8" fill="none" stroke="#c5c5c5" stroke-width="1.400"><path d="M1 1l6 6 6-6"/></svg>
  <svg class="chev" style="top:280.6px" width="14" height="8" viewBox="0 0 14 8" fill="none" stroke="#c5c5c5" stroke-width="1.400"><path d="M1 1l6 6 6-6"/></svg>
  <svg class="chev" style="top:568.3px" width="14" height="8" viewBox="0 0 14 8" fill="none" stroke="#c5c5c5" stroke-width="1.400"><path d="M1 1l6 6 6-6"/></svg>
  <svg class="abs" style="left:69px;top:62.5px" width="12" height="5" viewBox="0 0 12 5" fill="none" stroke="#cca700" stroke-width="1.200"><path d="M0 3.500c1.500-3 3-3 4.500-1s3 2 4.500-1"/></svg>
  <div class="abs" style="left:1011px;top:29px;width:1px;height:859px;background:#3a3a3a"></div>
  <div class="abs" style="left:1024px;top:28px;width:5px;height:17px;background:#e0b400"></div>
  <div class="abs" style="left:1013px;top:133px;width:16px;height:4px;background:#a0a0a0"></div>
  <div class="abs" style="left:1018px;top:133px;width:6px;height:16px;background:#a0a0a0"></div>
  <div class="abs" style="left:1018px;top:342px;width:5px;height:18px;background:#a0a0a0"></div>
</div>
<div id="vsep"></div>
<div id="bottombar">
  <div class="t" style="left:10px;font-size:15.500px">页面路径</div>
  <div class="caret" style="left:78px;top:16px;border-top-color:#9d9d9d;border-left-width:3.500px;border-right-width:3.500px"></div>
  <div class="abs" style="left:95px;top:9px;width:1px;height:17px;background:#5a5a5a"></div>
  <div class="t" style="left:106px;font-size:16px;letter-spacing:-0.05px">pages/index/index</div>
  <svg class="abs" style="left:241px;top:10px" width="16" height="16" viewBox="0 0 16 16" fill="none" stroke="#9d9d9d" stroke-width="1.300"><rect x="3.500" y="4" width="10" height="10.500" rx="1"/><path d="M1.500 11V2.500a1 1 0 0 1 1-1H10"/></svg>
  <svg class="abs" style="left:520px;top:7px" width="22" height="22" viewBox="0 0 22 20" fill="none" stroke="#9d9d9d" stroke-width="1.300"><ellipse cx="11" cy="11" rx="4.300" ry="6.300"/><path d="M11 4.700v12.600M8.200 4.800a2.800 2.800 0 0 1 5.600 0M6.700 8.500L3 6M6.700 11H2M6.700 13.800L3 16.500M15.300 8.500L19 6M15.300 11H20M15.300 13.800l3.700 2.700"/></svg>
  <svg class="abs" style="left:562px;top:10px" width="22" height="14" viewBox="0 0 24 14" fill="none" stroke="#9d9d9d" stroke-width="1.400"><path d="M1.500 7C4 3 7.800 1.200 12 1.200S20 3 22.500 7C20 11 16.200 12.800 12 12.800S4 11 1.500 7z"/><circle cx="12" cy="7" r="3.200"/></svg>
  <svg class="abs" style="left:605px;top:16px" width="18" height="4" viewBox="0 0 18 4" fill="#9d9d9d"><circle cx="2.200" cy="2" r="1.200"/><circle cx="9" cy="2" r="1.200"/><circle cx="15.800" cy="2" r="1.200"/></svg>
  <svg class="abs" style="left:656px;top:10px" width="15" height="15" viewBox="0 0 15 15" fill="none" stroke="#9d9d9d" stroke-width="1.200"><circle cx="7.500" cy="7.500" r="6.300"/><path d="M5 5l5 5M10 5l-5 5"/></svg>
  <div class="t" style="left:677px">0</div>
  <svg class="abs" style="left:691px;top:9px" width="16" height="15" viewBox="0 0 16 15" fill="none" stroke="#9d9d9d" stroke-width="1.200" stroke-linejoin="round"><path d="M8 1.500l6.800 12H1.200z"/><path d="M8 6v4M8 11.200v1.200"/></svg>
  <div class="t" style="left:712px">1</div>
  <div class="t" style="left:1552px">行 7，列 17</div>
  <div class="t" style="left:1652px">空格: 2</div>
  <div class="t" style="left:1720px;font-size:14px">UTF-8</div>
  <div class="t" style="left:1781px;font-size:14px;letter-spacing:-0.8px">CRLF</div>
  <div class="t" style="left:1834px;font-size:14px">JSON</div>
  <svg class="abs" style="left:1893px;top:9px" width="16" height="15" viewBox="0 0 16 15" fill="none" stroke="#9d9d9d" stroke-width="1.200" stroke-linejoin="round"><path d="M8 1.500l6.800 12H1.200z"/><path d="M8 6v4M8 11.200v1.200"/></svg>
</div>
</body>
</html>
